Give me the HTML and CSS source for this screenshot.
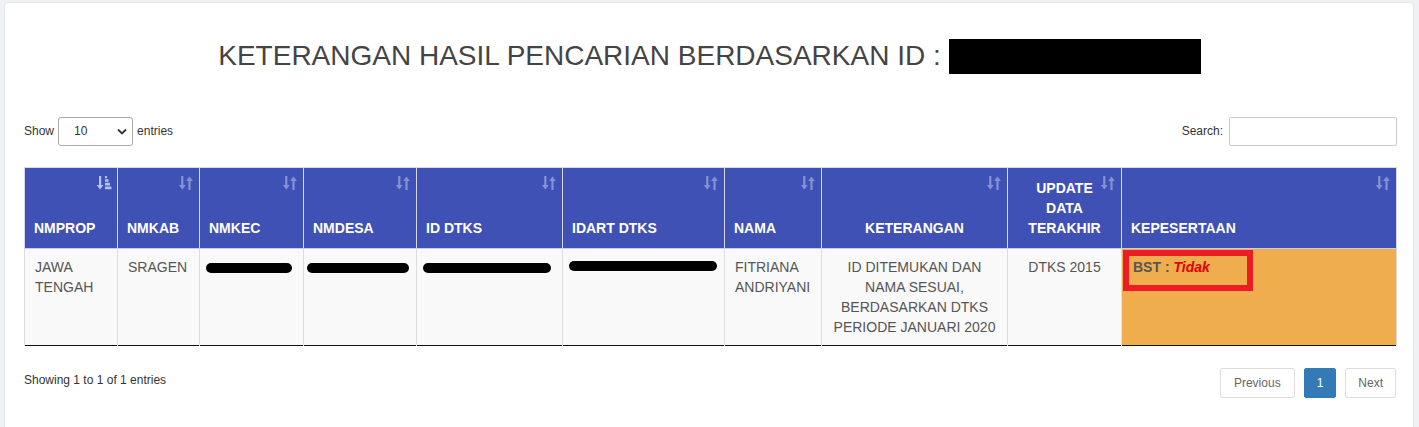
FILE: index.html
```html
<!DOCTYPE html>
<html>
<head>
<meta charset="utf-8">
<link rel="stylesheet" href="styles.css">
</head>
<body>
<div class="card">
  <h1 class="title">KETERANGAN HASIL PENCARIAN BERDASARKAN ID : <span class="redact-box"></span></h1>

  <div class="controls">
    <label class="length">Show
      <span class="select"><span class="select-val">10</span>
        <svg class="chev" width="10" height="7" viewBox="0 0 10 7"><path d="M1 1.5 L5 5.5 L9 1.5" fill="none" stroke="#333" stroke-width="1.8"/></svg>
      </span>
      entries</label>
    <label class="search">Search: <span class="search-input"></span></label>
  </div>

  <table class="data">
    <colgroup>
      <col style="width:93px"><col style="width:82px"><col style="width:104px"><col style="width:113px"><col style="width:146px"><col style="width:162px"><col style="width:97px"><col style="width:186px"><col style="width:114px"><col style="width:275px">
    </colgroup>
    <thead>
      <tr>
        <th>NMPROP<svg class="sort active" width="16" height="16" viewBox="0 0 16 16"><path d="M3 1 h2.2 v9 h2.3 l-3.4 4.6 l-3.4 -4.6 h2.3z"/><path d="M9 11.5 h6.5 v2.8 h-6.5z M9 7.8 h5 v2.6 h-5z M9 4.2 h3.5 v2.5 h-3.5z M9 1 h2 v2.2 h-2z"/></svg></th>
        <th>NMKAB<svg class="sort" width="14" height="16" viewBox="0 0 14 16"><path d="M2.2 1 h2.2 v9 h2.3 l-3.4 4.6 l-3.4 -4.6 h2.3z"/><path d="M9.4 15 h2.2 v-9 h2.3 l-3.4 -4.6 l-3.4 4.6 h2.3z"/></svg></th>
        <th>NMKEC<svg class="sort" width="14" height="16" viewBox="0 0 14 16"><path d="M2.2 1 h2.2 v9 h2.3 l-3.4 4.6 l-3.4 -4.6 h2.3z"/><path d="M9.4 15 h2.2 v-9 h2.3 l-3.4 -4.6 l-3.4 4.6 h2.3z"/></svg></th>
        <th>NMDESA<svg class="sort" width="14" height="16" viewBox="0 0 14 16"><path d="M2.2 1 h2.2 v9 h2.3 l-3.4 4.6 l-3.4 -4.6 h2.3z"/><path d="M9.4 15 h2.2 v-9 h2.3 l-3.4 -4.6 l-3.4 4.6 h2.3z"/></svg></th>
        <th>ID DTKS<svg class="sort" width="14" height="16" viewBox="0 0 14 16"><path d="M2.2 1 h2.2 v9 h2.3 l-3.4 4.6 l-3.4 -4.6 h2.3z"/><path d="M9.4 15 h2.2 v-9 h2.3 l-3.4 -4.6 l-3.4 4.6 h2.3z"/></svg></th>
        <th>IDART DTKS<svg class="sort" width="14" height="16" viewBox="0 0 14 16"><path d="M2.2 1 h2.2 v9 h2.3 l-3.4 4.6 l-3.4 -4.6 h2.3z"/><path d="M9.4 15 h2.2 v-9 h2.3 l-3.4 -4.6 l-3.4 4.6 h2.3z"/></svg></th>
        <th>NAMA<svg class="sort" width="14" height="16" viewBox="0 0 14 16"><path d="M2.2 1 h2.2 v9 h2.3 l-3.4 4.6 l-3.4 -4.6 h2.3z"/><path d="M9.4 15 h2.2 v-9 h2.3 l-3.4 -4.6 l-3.4 4.6 h2.3z"/></svg></th>
        <th class="center">KETERANGAN<svg class="sort" width="14" height="16" viewBox="0 0 14 16"><path d="M2.2 1 h2.2 v9 h2.3 l-3.4 4.6 l-3.4 -4.6 h2.3z"/><path d="M9.4 15 h2.2 v-9 h2.3 l-3.4 -4.6 l-3.4 4.6 h2.3z"/></svg></th>
        <th class="center">UPDATE<br>DATA<br>TERAKHIR<svg class="sort" width="14" height="16" viewBox="0 0 14 16"><path d="M2.2 1 h2.2 v9 h2.3 l-3.4 4.6 l-3.4 -4.6 h2.3z"/><path d="M9.4 15 h2.2 v-9 h2.3 l-3.4 -4.6 l-3.4 4.6 h2.3z"/></svg></th>
        <th>KEPESERTAAN<svg class="sort" width="14" height="16" viewBox="0 0 14 16"><path d="M2.2 1 h2.2 v9 h2.3 l-3.4 4.6 l-3.4 -4.6 h2.3z"/><path d="M9.4 15 h2.2 v-9 h2.3 l-3.4 -4.6 l-3.4 4.6 h2.3z"/></svg></th>
      </tr>
    </thead>
    <tbody>
      <tr>
        <td>JAWA<br>TENGAH</td>
        <td>SRAGEN</td>
        <td class="tight"><span class="blob" style="width:86px"></span></td>
        <td class="tight0"><span class="blob" style="width:102px"></span></td>
        <td class="tight"><span class="blob" style="width:128px"></span></td>
        <td class="tight"><span class="blob blob-up" style="width:148px"></span></td>
        <td>FITRIANA<br>ANDRIYANI</td>
        <td class="center">ID DITEMUKAN DAN NAMA SESUAI, BERDASARKAN DTKS PERIODE JANUARI 2020</td>
        <td class="center">DTKS 2015</td>
        <td class="warn"><span class="mark"></span><b class="bst">BST : </b><b class="tidak">Tidak</b></td>
      </tr>
    </tbody>
  </table>

  <div class="footer">
    <div class="info">Showing 1 to 1 of 1 entries</div>
    <div class="pager">
      <span class="pbtn">Previous</span>
      <span class="pbtn current">1</span>
      <span class="pbtn">Next</span>
    </div>
  </div>
</div>
</body>
</html>
```

FILE: styles.css
```css
html, body {
  margin: 0;
  padding: 0;
  background: #f0f1f5;
  font-family: "Liberation Sans", Arial, sans-serif;
}
body {
  padding: 2px 5px 0 4px;
}
.card {
  background: #fff;
  border: 1px solid #e4e6ea;
  border-radius: 4px;
  height: 440px;
  padding: 0 18px 0 19px;
  box-sizing: border-box;
}
.title {
  margin: 0;
  padding-top: 33px;
  height: 40px;
  font-weight: normal;
  font-size: 28px;
  color: #444;
  text-align: center;
  line-height: 40px;
  display: flex;
  justify-content: center;
  align-items: center;
  gap: 8px;
}
.redact-box {
  display: inline-block;
  width: 252px;
  height: 35px;
  background: #000;
}
.controls {
  margin-top: 40px;
  display: flex;
  justify-content: space-between;
  align-items: center;
  font-size: 12px;
  color: #333;
  height: 30px;
}
.length {
  display: flex;
  align-items: center;
  gap: 4px;
}
.select {
  width: 75px;
  height: 29px;
  box-sizing: border-box;
  border: 1px solid #aaa;
  border-radius: 3px;
  display: flex;
  align-items: center;
  justify-content: space-between;
  padding: 0 5px 0 15px;
  background: #fff;
  color: #333;
}
.search {
  display: flex;
  align-items: center;
  gap: 6px;
  margin-right: -2px;
}
.search-input {
  width: 168px;
  height: 29px;
  box-sizing: border-box;
  border: 1px solid #ccc;
  border-radius: 2px;
  display: inline-block;
}
.data {
  margin-top: 21px;
  width: 1372px;
  border-collapse: collapse;
  table-layout: fixed;
  font-size: 14px;
  line-height: 20px;
  border-bottom: 1px solid #111;
}
.data th {
  position: relative;
  background: #3f51b5;
  color: #fff;
  font-weight: bold;
  text-align: left;
  vertical-align: bottom;
  padding: 10px 9px 10px 9px;
  border: 1px solid #d5d8ee;
  border-bottom: 1px solid #c9cde3;
}
.data th.center {
  text-align: center;
}
.sort {
  position: absolute;
  top: 7px;
  right: 6px;
  fill: #8591d6;
}
.sort.active {
  fill: #b7bfec;
  right: 5px;
}
.data td {
  background: #f9f9f9;
  color: #555;
  vertical-align: top;
  padding: 8px 10px;
  border-left: 1px solid #ddd;
  border-right: 1px solid #ddd;
  text-align: left;
}
.data td.center {
  text-align: center;
  padding: 8px 6px;
}
.data td.tight {
  padding: 8px 6px;
}
.data td.tight0 {
  padding: 8px 0 8px 3px;
}
.blob {
  display: block;
  height: 10px;
  margin-top: 6px;
  background: #000;
  border-radius: 5px;
}
.blob-up {
  margin-top: 4px;
}
.data td.warn {
  position: relative;
  background: #f0ad4e;
  padding-left: 11px;
}
.mark {
  position: absolute;
  left: 1px;
  top: 1px;
  width: 118px;
  height: 29px;
  border: 6px solid #ed1c24;
}
.bst {
  position: relative;
  color: #555;
}
.tidak {
  position: relative;
  color: #e00000;
  font-style: italic;
}
.footer {
  margin-top: 22px;
  display: flex;
  justify-content: space-between;
  align-items: flex-start;
  font-size: 12px;
  color: #333;
}
.info {
  padding-top: 5px;
}
.pager {
  display: flex;
  gap: 9px;
  margin-right: -1px;
}
.pbtn {
  height: 30px;
  box-sizing: border-box;
  border: 1px solid #ddd;
  border-radius: 2px;
  padding: 0 13px;
  display: flex;
  align-items: center;
  color: #666;
  background: #fff;
}
.pbtn:last-child {
  padding: 0 12px;
}
.pbtn.current {
  background: #337ab7;
  border-color: #337ab7;
  color: #fff;
  padding: 0 12px;
}
```
